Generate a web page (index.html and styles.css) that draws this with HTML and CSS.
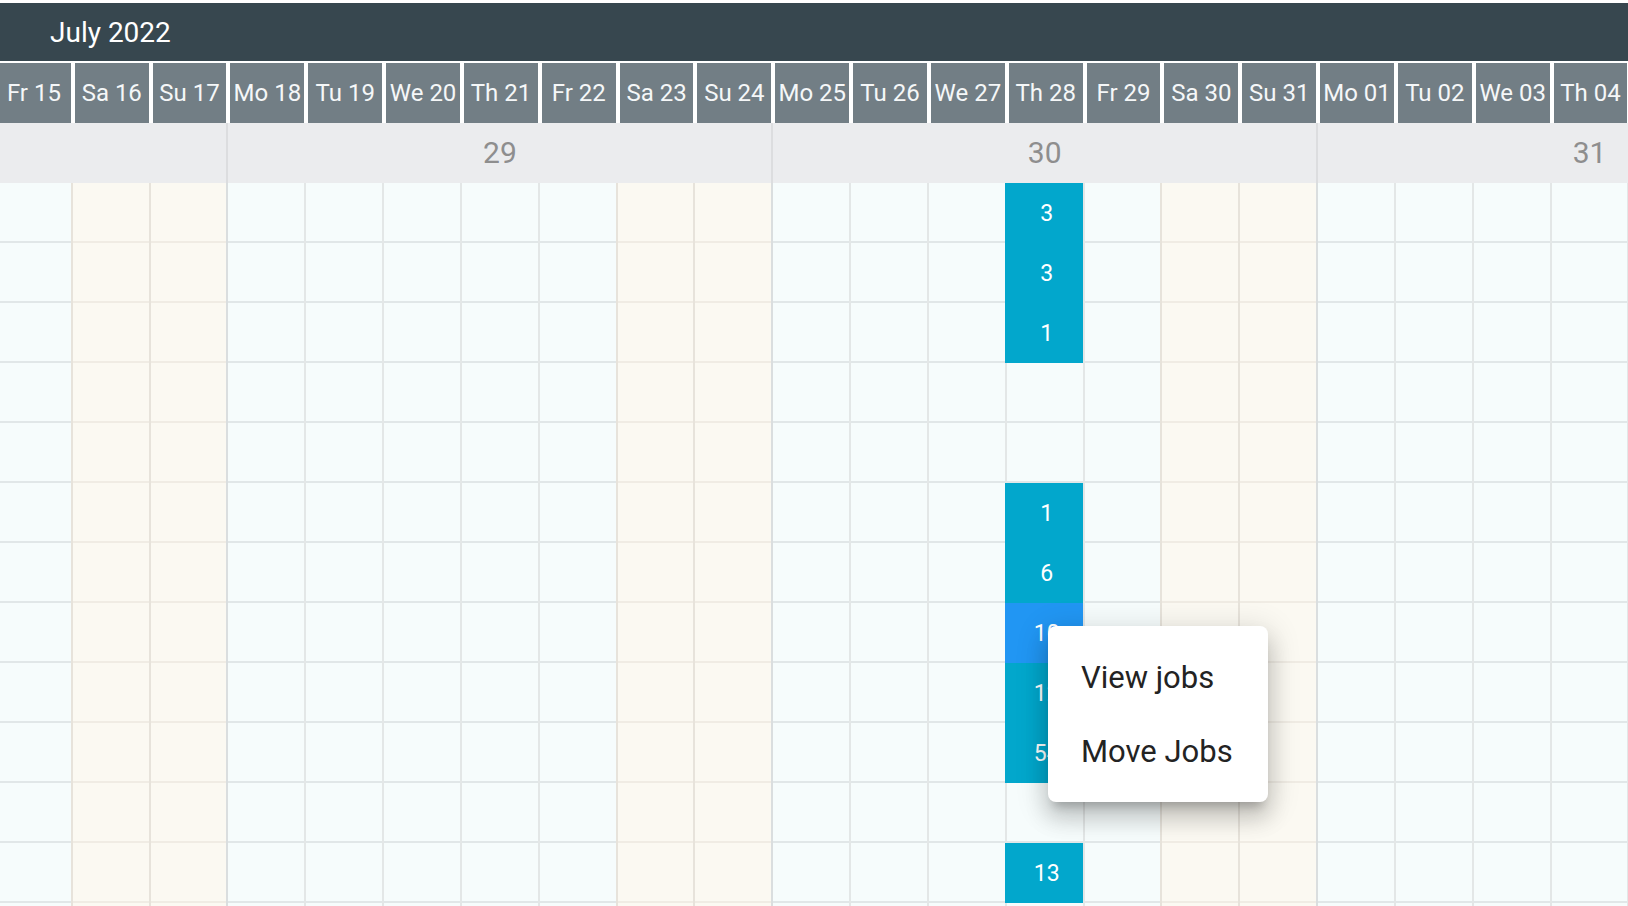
FILE: index.html
```html
<!DOCTYPE html>
<html lang="en">
<head>
<meta charset="utf-8">
<title>Timeline July 2022</title>
<link rel="stylesheet" href="styles.css">
</head>
<body>
<header class="topbar">July 2022</header>
<div class="viewport">
  <div class="timeline">
    <div class="days">
      <div class="day"></div><div class="day"></div><div class="day"></div><div class="day"></div>
      <div class="day">Fr 15</div><div class="day">Sa 16</div><div class="day">Su 17</div><div class="day">Mo 18</div>
      <div class="day">Tu 19</div><div class="day">We 20</div><div class="day">Th 21</div><div class="day">Fr 22</div>
      <div class="day">Sa 23</div><div class="day">Su 24</div><div class="day">Mo 25</div><div class="day">Tu 26</div>
      <div class="day">We 27</div><div class="day">Th 28</div><div class="day">Fr 29</div><div class="day">Sa 30</div>
      <div class="day">Su 31</div><div class="day">Mo 01</div><div class="day">Tu 02</div><div class="day">We 03</div>
      <div class="day">Th 04</div><div class="day"></div><div class="day"></div><div class="day"></div>
    </div>
    <div class="weeks">
      <div class="week"></div>
      <div class="week">29</div>
      <div class="week">30</div>
      <div class="week">31</div>
    </div>
    <div class="grid">
      <div class="col monday"></div><div class="col"></div><div class="col"></div><div class="col"></div>
      <div class="col"></div><div class="col weekend"></div><div class="col weekend"></div><div class="col monday"></div>
      <div class="col"></div><div class="col"></div><div class="col"></div><div class="col"></div>
      <div class="col weekend"></div><div class="col weekend"></div><div class="col monday"></div><div class="col"></div>
      <div class="col"></div>
      <div class="col">
        <div class="slot job">3</div>
        <div class="slot job">3</div>
        <div class="slot job">1</div>
        <div class="slot"></div>
        <div class="slot"></div>
        <div class="slot job">1</div>
        <div class="slot job">6</div>
        <div class="slot job active">10</div>
        <div class="slot job">12</div>
        <div class="slot job">54</div>
        <div class="slot"></div>
        <div class="slot job">13</div>
      </div>
      <div class="col"></div><div class="col weekend"></div>
      <div class="col weekend"></div><div class="col monday"></div><div class="col"></div><div class="col"></div>
      <div class="col"></div><div class="col"></div><div class="col weekend"></div><div class="col weekend"></div>
    </div>
  </div>
</div>
<ul class="menu">
  <li class="menu-item">View jobs</li>
  <li class="menu-item">Move Jobs</li>
</ul>
</body>
</html>
```
FILE: styles.css
```css
html, body {
  margin: 0;
  padding: 0;
  overflow: hidden;
  height: 906px;
  background: #ffffff;
  font-family: Roboto, "Noto Sans", "Liberation Sans", sans-serif;
}

body {
  padding-top: 3px;
  box-sizing: border-box;
  position: relative;
}

.topbar {
  height: 58px;
  background: #37474f;
  color: #ffffff;
  font-size: 28px;
  display: flex;
  align-items: center;
  padding-left: 50px;
  box-sizing: border-box;
}

.viewport {
  margin-top: 2px;
  overflow: hidden;
  width: 100%;
}

.timeline {
  width: 2179.24px;
  margin-left: -318.32px;
}

.days {
  display: grid;
  grid-template-columns: repeat(28, 1fr);
  height: 60px;
}

.day {
  margin-left: 4px;
  background: #727e85;
  color: #f5f7f8;
  font-size: 24px;
  display: flex;
  align-items: center;
  justify-content: center;
  white-space: nowrap;
  overflow: hidden;
}

.weeks {
  display: grid;
  grid-template-columns: repeat(4, 1fr);
  height: 60px;
  background: #ebecee;
}

.week {
  border-left: 2px solid #dcdddf;
  color: #8e8e8e;
  font-size: 30px;
  display: flex;
  align-items: center;
  justify-content: center;
  padding-bottom: 1px;
  box-sizing: border-box;
}

.grid {
  display: grid;
  grid-template-columns: repeat(28, 1fr);
  height: 780px;
}

.col {
  border-left: 2px solid #e3e7e7;
  background:
    repeating-linear-gradient(to bottom, transparent 0 58px, #e1e7e8 58px 60px),
    #f6fcfc;
  display: flex;
  flex-direction: column;
}

.col.monday {
  border-left-color: #dadedf;
}

.col.weekend {
  border-left-color: #e7e3db;
  background:
    repeating-linear-gradient(to bottom, transparent 0 58px, #f0ece4 58px 60px),
    #fbf9f2;
}

.slot {
  height: 60px;
  flex: none;
}

.job {
  margin-left: -2px;
  padding-left: 6px;
  background: #02a7cc;
  color: #ffffff;
  font-size: 23px;
  display: flex;
  align-items: center;
  justify-content: center;
  box-sizing: border-box;
}

.job.active {
  background: #2196f3;
}

.menu {
  position: absolute;
  left: 1048px;
  top: 626px;
  width: 220px;
  height: 176px;
  margin: 0;
  padding: 14px 0;
  box-sizing: border-box;
  list-style: none;
  background: #ffffff;
  border-radius: 8px;
  box-shadow:
    0 10px 10px -6px rgba(0, 0, 0, 0.2),
    0 16px 22px 2px rgba(0, 0, 0, 0.14),
    0 6px 30px 5px rgba(0, 0, 0, 0.12);
}

.menu-item {
  height: 74px;
  padding-left: 33px;
  display: flex;
  align-items: center;
  font-size: 31px;
  color: #232323;
}
```
